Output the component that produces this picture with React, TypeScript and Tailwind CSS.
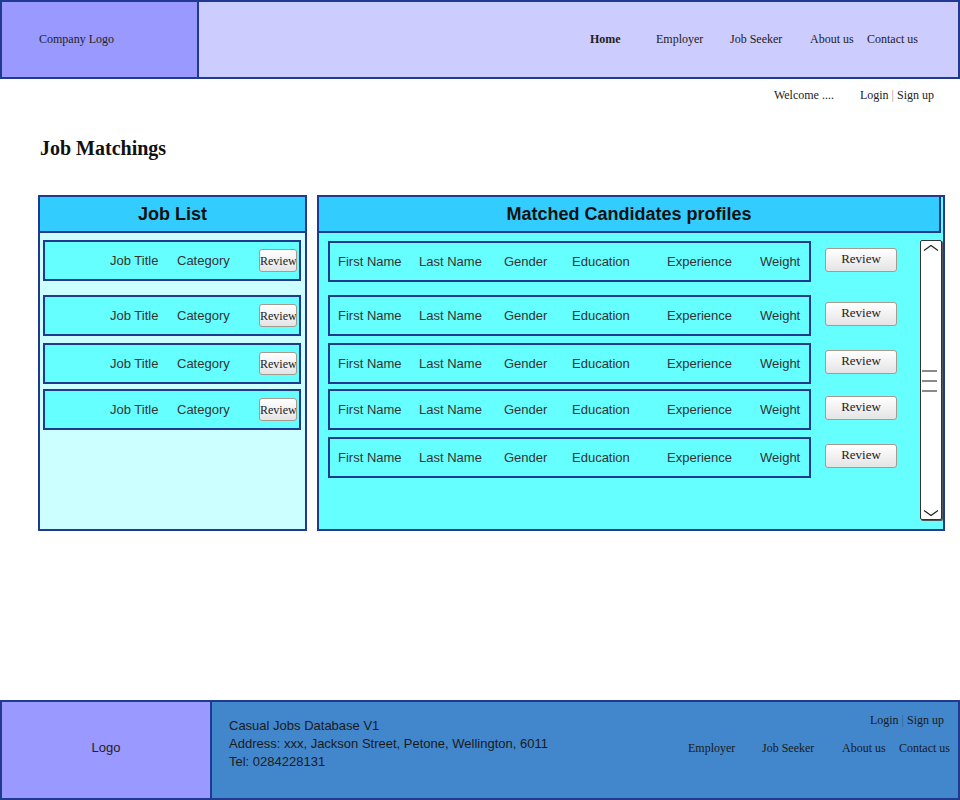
import React from 'react'

const serif = 'font-["Liberation_Serif","Times_New_Roman",serif]'
const sans = 'font-["Liberation_Sans",Arial,sans-serif]'

const jobGaps = ['mt-[7px]', 'mt-[14px]', 'mt-[7px]', 'mt-[5px]']
const candGaps = ['mt-[8px]', 'mt-[13px]', 'mt-[7px]', 'mt-[5px]', 'mt-[7px]']

function ReviewButton({ wide }: { wide?: boolean }) {
  return (
    <button
      type="button"
      className={`${serif} ${
        wide ? 'w-[72px] h-[24px] pb-[4px] text-[13px]' : 'w-[38px] h-[23px] text-[12px]'
      } block shrink-0 overflow-hidden whitespace-nowrap rounded-[3px] border border-[#a89a8c] bg-gradient-to-b from-white to-[#e4e4e4] px-0 leading-none text-[#222]`}
    >
      Review
    </button>
  )
}

function Scrollbar() {
  return (
    <div className="absolute right-[1px] top-[43px] flex h-[280px] w-[22px] flex-col items-center justify-between rounded-[2px] border border-[#333] bg-white shadow-[1px_1px_0_#555]">
      <svg width="16" height="8" viewBox="0 0 16 8" className="mt-[3px]">
        <path d="M1 6.5 L8 1.5 L15 6.5" fill="none" stroke="#222" strokeWidth="1.2" />
      </svg>
      <div className="flex w-full flex-col gap-[8px] pl-[1px]">
        <div className="h-[2px] w-[15px] bg-[#8a8a8a]" />
        <div className="h-[2px] w-[15px] bg-[#8a8a8a]" />
        <div className="h-[2px] w-[15px] bg-[#8a8a8a]" />
      </div>
      <svg width="16" height="8" viewBox="0 0 16 8" className="mb-[2px]">
        <path d="M1 1.5 L8 6.5 L15 1.5" fill="none" stroke="#222" strokeWidth="1.2" />
      </svg>
    </div>
  )
}

export default function App() {
  return (
    <div className="flex h-[800px] w-[960px] flex-col bg-white">
      <div className="h-[700px]">
        {/* header */}
        <div className="flex h-[79px] border-2 border-[#1f3a8f] bg-[#ccccff]">
          <div className={`${serif} flex w-[197px] items-center border-r-2 border-[#1f3a8f] bg-[#9999ff] pb-[2px] pl-[37px] text-[12px] text-[#222]`}>
            Company Logo
          </div>
          <nav className={`${serif} ml-auto flex items-center pb-[2px] text-[12px] text-[#222]`}>
            <span className="w-[66px] font-bold">Home</span>
            <span className="w-[74px]">Employer</span>
            <span className="w-[80px]">Job Seeker</span>
            <span className="w-[57px]">About us</span>
            <span className="w-[91px]">Contact us</span>
          </nav>
        </div>

        {/* welcome */}
        <div className={`${serif} mt-[8px] flex justify-end pr-[26px] text-[12px] leading-[16px] text-[#222]`}>
          <span className="w-[86px]">Welcome ....</span>
          <span>
            Login <span className="text-[#999]">|</span> Sign up
          </span>
        </div>

        <h3 className={`${serif} mt-[34px] pl-[40px] text-[20px] font-bold leading-[22px] text-[#111]`}>
          Job Matchings
        </h3>

        <div className="mt-[36px] flex gap-[10px] pl-[38px]">
          {/* job list */}
          <div className="h-[336px] w-[269px] border-2 border-[#1f3a8f] bg-[#ccffff]">
            <div className={`${sans} flex h-[36px] items-center justify-center border-b-2 border-[#1f3a8f] bg-[#33ccff] text-[18px] font-bold text-[#111]`}>
              Job List
            </div>
            {jobGaps.map((g, i) => (
              <div
                key={i}
                className={`${g} ${sans} ml-[3px] flex h-[41px] w-[258px] items-center border-2 border-[#1f3a8f] bg-[#66ffff] pl-[65px] pr-[2px] text-[13px] text-[#333]`}
              >
                <span className="w-[67px]">Job Title</span>
                <span>Category</span>
                <div className="ml-auto flex">
                  <ReviewButton />
                </div>
              </div>
            ))}
          </div>

          {/* matched candidates */}
          <div className="relative h-[336px] w-[628px] border-2 border-[#1f3a8f] bg-[#66ffff]">
            <div className={`${sans} mr-[2px] flex h-[36px] items-center justify-center border-b-2 border-r-2 border-[#1f3a8f] bg-[#33ccff] text-[18px] font-bold text-[#111]`}>
              Matched Candidates profiles
            </div>
            {candGaps.map((g, i) => (
              <div key={i} className={`${g} flex items-start`}>
                <div className={`${sans} ml-[9px] flex h-[41px] w-[483px] items-center whitespace-nowrap border-2 border-[#1f3a8f] pl-[8px] text-[13px] text-[#333]`}>
                  <span className="w-[81px]">First Name</span>
                  <span className="w-[85px]">Last Name</span>
                  <span className="w-[68px]">Gender</span>
                  <span className="w-[95px]">Education</span>
                  <span className="w-[93px]">Experience</span>
                  <span>Weight</span>
                </div>
                <div className="ml-[14px] mt-[7px] flex">
                  <ReviewButton wide />
                </div>
              </div>
            ))}
            <Scrollbar />
          </div>
        </div>
      </div>

      {/* footer */}
      <div className="flex h-[100px] border-2 border-[#1f3a8f] bg-[#4287cc]">
        <div className={`${sans} flex w-[210px] items-center justify-center border-r-2 border-[#1f3a8f] bg-[#9999ff] pb-[4px] text-[13px] text-[#222]`}>
          Logo
        </div>
        <div className={`${sans} pl-[17px] pt-[15px] text-[13px] leading-[18px] text-[#1a1a1a]`}>
          <div>Casual Jobs Database V1</div>
          <div>Address: xxx, Jackson Street, Petone, Wellington, 6011</div>
          <div>Tel: 0284228131</div>
        </div>
        <div className={`${serif} ml-auto flex flex-col items-end pt-[10px] text-[12px] leading-[16px] text-[#1a1a1a]`}>
          <div className="pr-[14px]">
            Login <span className="text-[#2b5f95]">|</span> Sign up
          </div>
          <div className="mt-[12px] flex">
            <span className="w-[74px]">Employer</span>
            <span className="w-[80px]">Job Seeker</span>
            <span className="w-[57px]">About us</span>
            <span className="w-[59px]">Contact us</span>
          </div>
        </div>
      </div>
    </div>
  )
}
